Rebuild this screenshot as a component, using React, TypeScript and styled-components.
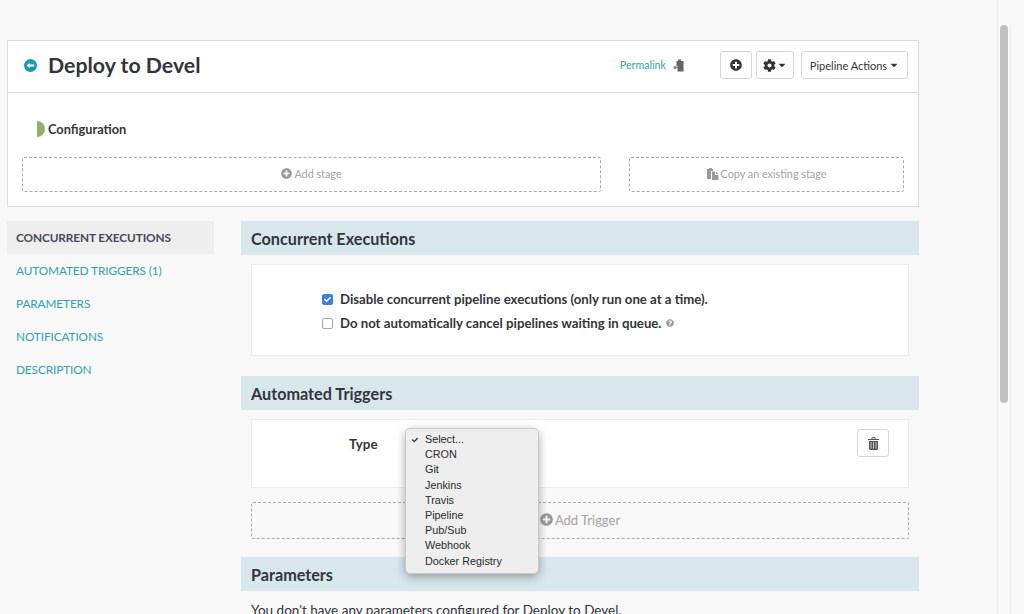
import React from "react";
import styled, { createGlobalStyle } from "styled-components";
import { FaPlusCircle, FaCog, FaCaretDown, FaQuestionCircle, FaCheck } from "react-icons/fa";

const GlobalStyle = createGlobalStyle`
  html, body {
    margin: 0;
    height: 100%;
    overflow: hidden;
    background: #f8f8f8;
    font-family: "Lato", "Liberation Sans", sans-serif;
    color: #33353d;
  }
`;

const Page = styled.div`
  position: relative;
  width: 1024px;
  height: 614px;
  overflow: hidden;
  padding: 40px 0 0 7px;
  box-sizing: border-box;
`;

const Scrollbar = styled.div`
  position: absolute;
  top: 0;
  right: 0;
  width: 27px;
  height: 614px;
  background: #f8f8f8;
  border-left: 1px solid #ececec;
  box-sizing: border-box;
`;

const ScrollTrack = styled.div`
  width: 13px;
  height: 100%;
  border-right: 1px solid #ececec;
  padding-left: 2px;
  box-sizing: border-box;
`;

const ScrollThumb = styled.div`
  width: 8px;
  height: 378px;
  margin-top: 25px;
  background: #c1c1c1;
  border-radius: 4px;
`;

const Content = styled.div`
  width: 912px;
`;

const HeaderCard = styled.div`
  height: 167px;
  background: #fff;
  border: 1px solid #ddd;
  box-sizing: border-box;
`;

const TitleBar = styled.div`
  height: 52px;
  box-sizing: border-box;
  display: flex;
  align-items: center;
  padding: 0 10px 3px 16px;
  border-bottom: 1px solid #ddd;
`;

const BackIcon = styled.svg`
  width: 13px;
  height: 13px;
  margin-right: 11px;
  flex: none;
`;

const Title = styled.h1`
  margin: 0 0 1px;
  flex: 1;
  font-size: 21.3px;
  font-weight: 700;
  color: #33353d;
`;

const Permalink = styled.a`
  font-size: 10.7px;
  color: #2f9fb5;
  margin: 0 7px 1px 0;
`;

const PermalinkIcon = styled.svg`
  width: 11px;
  height: 13px;
  margin-right: 36px;
`;

const ToolButton = styled.button<{ $width: number; $gap?: number }>`
  width: ${(p) => p.$width}px;
  height: 28px;
  margin-right: ${(p) => p.$gap ?? 0}px;
  padding: 0;
  display: flex;
  align-items: center;
  justify-content: center;
  background: #fff;
  border: 1px solid #d6d6d6;
  border-radius: 3px;
  font-family: inherit;
  font-size: 11px;
  color: #33353d;
  white-space: nowrap;
`;

const StagesArea = styled.div`
  padding: 28px 14px 0;
`;

const StageLabel = styled.div`
  display: flex;
  align-items: center;
  height: 16px;
  margin-left: 15px;
  font-size: 12.8px;
  font-weight: 700;
`;

const StageMark = styled.span`
  width: 8px;
  height: 16px;
  margin-right: 3px;
  background: #8fb26a;
  border-radius: 0 8px 8px 0;
`;

const StageActions = styled.div`
  display: flex;
  justify-content: space-between;
  margin-top: 20px;
`;

const DashedButton = styled.div<{ $width: number; $height?: number; $size?: number }>`
  width: ${(p) => p.$width}px;
  height: ${(p) => p.$height ?? 35}px;
  display: flex;
  align-items: center;
  justify-content: center;
  gap: 2px;
  padding-bottom: 2px;
  box-sizing: border-box;
  border: 1px dashed #aaa;
  border-radius: 2px;
  font-size: ${(p) => p.$size ?? 10.8}px;
  color: #a3a3a3;
`;

const Columns = styled.div`
  display: grid;
  grid-template-columns: 234px 678px;
  margin-top: 14px;
`;

const SideNav = styled.nav`
  width: 207px;
`;

const NavItem = styled.a<{ $active?: boolean }>`
  display: flex;
  align-items: center;
  height: 33px;
  padding-left: 9px;
  font-size: 11.8px;
  letter-spacing: -0.1px;
  font-weight: ${(p) => (p.$active ? 700 : 400)};
  color: ${(p) => (p.$active ? "#454a5a" : "#2f9fb5")};
  background: ${(p) => (p.$active ? "#eee" : "transparent")};
`;

const Main = styled.main`
  position: relative;
`;

const SectionHeading = styled.h2`
  margin: 0;
  height: 34px;
  display: flex;
  align-items: center;
  padding: 1px 0 0 10px;
  box-sizing: border-box;
  background: #d7e7ec;
  font-size: 16.2px;
  font-weight: 700;
  color: #33353d;
`;

const ConcurrentCard = styled.div`
  margin: 9px 10px 20px;
  height: 92px;
  padding: 22px 0 0 70px;
  box-sizing: border-box;
  background: #fff;
  border: 1px solid #ececec;
`;

const CheckRow = styled.div`
  display: flex;
  align-items: center;
  height: 24px;
  font-size: 13.2px;
  font-weight: 700;
  color: #33353d;
`;

const CheckBox = styled.span<{ $checked?: boolean }>`
  width: 11px;
  height: 11px;
  margin-right: 7px;
  box-sizing: border-box;
  display: flex;
  align-items: center;
  justify-content: center;
  color: #fff;
  font-size: 7px;
  border-radius: 2px;
  border: 1px solid ${(p) => (p.$checked ? "#3b82e0" : "#aaa")};
  background: ${(p) => (p.$checked ? "#3b82e0" : "#fff")};
`;

const HelpIcon = styled(FaQuestionCircle)`
  margin-left: 4px;
  font-size: 8px;
  color: #999;
`;

const TriggerCard = styled.div`
  margin: 9px 10px 14px;
  height: 69px;
  display: flex;
  justify-content: space-between;
  padding: 9px 19px 0 97px;
  box-sizing: border-box;
  background: #fff;
  border: 1px solid #ececec;
`;

const FieldLabel = styled.div`
  margin-top: 7px;
  font-size: 13.3px;
  font-weight: 700;
`;

const TrashButton = styled.button`
  width: 32px;
  height: 28px;
  padding: 0;
  display: flex;
  align-items: center;
  justify-content: center;
  background: #fff;
  border: 1px solid #d6d6d6;
  border-radius: 3px;
`;

const AddTrigger = styled(DashedButton)`
  margin: 0 10px 18px;
`;

const EmptyText = styled.p`
  margin: 11px 0 0 10px;
  font-size: 13.5px;
  color: #33353d;
`;

const SelectMenu = styled.ul`
  position: absolute;
  left: 164px;
  top: 207px;
  width: 134px;
  height: 146px;
  margin: 0;
  padding: 3px 0 0;
  box-sizing: border-box;
  list-style: none;
  background: #eeeeee;
  border-radius: 5px;
  border: 1px solid #c9c9c9;
  box-shadow: 0 3px 10px rgba(0, 0, 0, 0.32);
  font-family: "Liberation Sans", Arial, sans-serif;
  font-size: 10.8px;
  color: #2b2b2b;
`;

const MenuOption = styled.li`
  position: relative;
  height: 15.2px;
  line-height: 15px;
  padding-left: 19px;
`;

const MenuCheck = styled(FaCheck)`
  position: absolute;
  left: 6px;
  top: 5px;
  font-size: 6px;
`;

const triggerTypes = ["Select...", "CRON", "Git", "Jenkins", "Travis", "Pipeline", "Pub/Sub", "Webhook", "Docker Registry"];
const navItems = ["CONCURRENT EXECUTIONS", "AUTOMATED TRIGGERS (1)", "PARAMETERS", "NOTIFICATIONS", "DESCRIPTION"];

export default function App() {
  return (
    <Page>
      <GlobalStyle />
      <Content>
        <HeaderCard>
          <TitleBar>
            <BackIcon viewBox="0 0 14 14">
              <circle cx="7" cy="7" r="7" fill="#139cb5" />
              <path d="M3 7l3-3v2h5v2H6v2z" fill="#fff" />
            </BackIcon>
            <Title>Deploy to Devel</Title>
            <Permalink>Permalink</Permalink>
            <PermalinkIcon viewBox="0 0 11 13">
              <path d="M3.5 2h1.5V0.5h3V2h2.5v10.5H4.5V9.5H5V7H3.5z" fill="#666" />
              <path d="M0 8.5l2.5-2.5v1.5H5v2H2.5v1.5z" fill="#888" />
            </PermalinkIcon>
            <ToolButton $width={32} $gap={4}>
              <FaPlusCircle size={12} color="#333" />
            </ToolButton>
            <ToolButton $width={38} $gap={7}>
              <FaCog size={13} color="#333" />
              <FaCaretDown size={10} color="#333" style={{ marginLeft: 1 }} />
            </ToolButton>
            <ToolButton $width={107}>
              Pipeline Actions
              <FaCaretDown size={10} color="#333" style={{ marginLeft: 2 }} />
            </ToolButton>
          </TitleBar>
          <StagesArea>
            <StageLabel>
              <StageMark />
              Configuration
            </StageLabel>
            <StageActions>
              <DashedButton $width={579}>
                <FaPlusCircle size={11} color="#999" />
                Add stage
              </DashedButton>
              <DashedButton $width={275}>
                <svg width="12" height="12" viewBox="0 0 12 12">
                  <path d="M0 1h2V0h3v1h1v2H4v8H0zM5 3.5h3V7h3.5v5H5zM9 3.5l2.5 2.5H9z" fill="#999" />
                </svg>
                Copy an existing stage
              </DashedButton>
            </StageActions>
          </StagesArea>
        </HeaderCard>
        <Columns>
          <SideNav>
            {navItems.map((item, i) => (
              <NavItem key={item} $active={i === 0}>
                {item}
              </NavItem>
            ))}
          </SideNav>
          <Main>
            <SectionHeading>Concurrent Executions</SectionHeading>
            <ConcurrentCard>
              <CheckRow>
                <CheckBox $checked>
                  <FaCheck />
                </CheckBox>
                Disable concurrent pipeline executions (only run one at a time).
              </CheckRow>
              <CheckRow>
                <CheckBox />
                Do not automatically cancel pipelines waiting in queue.
                <HelpIcon />
              </CheckRow>
            </ConcurrentCard>
            <SectionHeading>Automated Triggers</SectionHeading>
            <TriggerCard>
              <FieldLabel>Type</FieldLabel>
              <TrashButton>
                <svg width="11" height="13" viewBox="0 0 11 13">
                  <path d="M3.5 2V1l1-1h2l1 1v1H11v1H0V2zM4.5 1v1h2V1zM1 4h9v8l-1 1H2l-1-1z" fill="#555" />
                  <path d="M3 5v6.5M5.5 5v6.5M8 5v6.5" stroke="#fff" strokeWidth="0.7" />
                </svg>
              </TrashButton>
            </TriggerCard>
            <AddTrigger $width={658} $height={37} $size={13}>
              <FaPlusCircle size={13} color="#999" />
              Add Trigger
            </AddTrigger>
            <SectionHeading>Parameters</SectionHeading>
            <EmptyText>You don't have any parameters configured for Deploy to Devel.</EmptyText>
            <SelectMenu>
              {triggerTypes.map((t, i) => (
                <MenuOption key={t}>
                  {i === 0 && <MenuCheck />}
                  {t}
                </MenuOption>
              ))}
            </SelectMenu>
          </Main>
        </Columns>
      </Content>
      <Scrollbar>
        <ScrollTrack>
          <ScrollThumb />
        </ScrollTrack>
      </Scrollbar>
    </Page>
  );
}
